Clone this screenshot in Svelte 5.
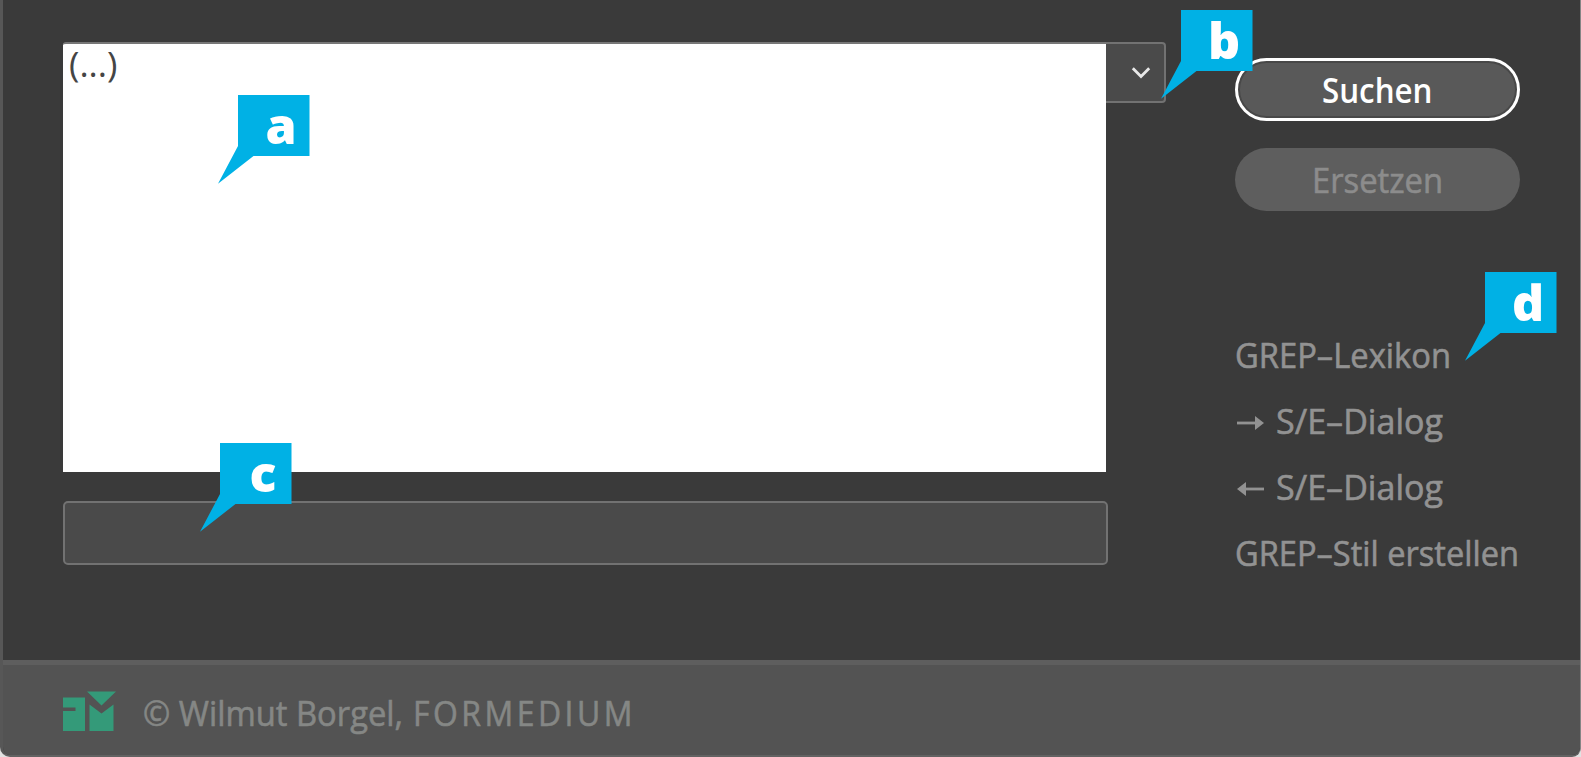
<script>
  const links = [
    { text: 'GREP–Lexikon', width: 216, arrow: null },
    { text: 'S/E–Dialog', width: 167, arrow: 'right' },
    { text: 'S/E–Dialog', width: 167, arrow: 'left' },
    { text: 'GREP–Stil erstellen', width: 284, arrow: null }
  ];
  const tags = [
    { letter: 'a', x: 218, y: 95 },
    { letter: 'b', x: 1161, y: 10.4 },
    { letter: 'c', x: 200, y: 443.4 },
    { letter: 'd', x: 1465.4, y: 271.7 }
  ];
</script>

{#snippet label(text, width, cls = '')}
  <svg class="label {cls}" {width} height="44" aria-label={text}>
    <text x="0" y="33" textLength={width} lengthAdjust="spacingAndGlyphs">{text}</text>
  </svg>
{/snippet}

<div class="window">
  <main>
    <section class="fields">
      <div class="search">
        <div class="editor">{@render label('(...)', 48.5, 'dark')}</div>
        <button class="drop" aria-label="Menü">
          <svg width="20" height="14" viewBox="0 0 20 14"><path d="M1.8 2.2 10 10.4 18.2 2.2" /></svg>
        </button>
      </div>
      <div class="replace"></div>
    </section>
    <aside>
      <button class="pill primary">{@render label('Suchen', 110.5, 'bold')}</button>
      <button class="pill muted">{@render label('Ersetzen', 131, 'dim')}</button>
      <nav>
        {#each links as link}
          <div class="link">
            {#if link.arrow}
              <svg class="arrow {link.arrow}" width="27" height="18" viewBox="0 0 27 18">
                <path d="M0 9H22" /><path class="head" d="M18 2V16L27 9Z" />
              </svg>
            {/if}
            {@render label(link.text, link.width)}
          </div>
        {/each}
      </nav>
    </aside>
  </main>
  <footer>
    <svg class="logo" width="54" height="41" viewBox="0 0 54 41">
      <path d="M0 6.5H22V40H0V20H12.5V16.5H0Z" />
      <path d="M24 .5H53L38.5 14.5Z" />
      <path d="M26.5 13.5 38.5 22.5 50.5 13.5V40H26.5Z" />
    </svg>
    {@render label('© Wilmut Borgel,', 260, 'copy')}
    <span class="brand">{@render label('FORMEDIUM', 223, 'copy wide')}</span>
  </footer>
</div>

{#each tags as tag}
  <svg class="tag" style="left:{tag.x}px;top:{tag.y}px" width="92" height="90">
    <path d="M20 0H91.5V61H35.5L0 88.8 20 51Z" />
    <text x="63" y="48.8">{tag.letter}</text>
  </svg>
{/each}

<style>
  :global(body) { background: #e2e2e2; overflow: hidden; }
  * { box-sizing: border-box; }
  .window {
    width: 1581px; height: 757px; display: flex; flex-direction: column;
    background: #3a3a3a; border-left: 3px solid #575757; border-right: 1px solid #858585;
    border-bottom: 2px solid #626262; border-radius: 0 0 9px 10px; overflow: hidden;
  }
  main { flex: 1; display: flex; justify-content: space-between; padding: 42.4px 60px 0; }
  .search { display: flex; width: 1103px; }
  .editor {
    width: 1043px; height: 430px; background: #fff; border-top: 2.6px solid #777;
    padding: 0 0 0 6px; border-top-left-radius: 3px;
  }
  .drop {
    width: 60px; height: 61px; padding: 1px 13px 0 0; display: flex; align-items: center; justify-content: flex-end;
    border: 2.7px solid #727272; border-left: 0; border-radius: 0 4px 4px 0; background: #4a4a4a;
  }
  .drop path { fill: none; stroke: #e8e8e8; stroke-width: 2.8; }
  .replace {
    width: 1045px; height: 64px; margin-top: 29px; background: #4a4a4a;
    border: 2.7px solid #727272; border-radius: 5px;
  }
  aside { width: 285px; padding-top: 15.6px; }
  .pill {
    display: flex; justify-content: center; align-items: center; width: 285px; height: 63px;
    padding: 6px 0 0; border: 0; border-radius: 32px; background: #5e5e5e;
  }
  .primary { border: 3px solid #fff; background: #595959; box-shadow: inset 0 0 0 2px #484848; }
  .muted { margin-top: 27px; }
  .label {
    display: block; overflow: visible; flex: none;
    font: 500 33.8px 'Open Sans', 'Noto Sans', sans-serif;
    fill: #929292; stroke: #929292; stroke-width: .6px;
  }
  .label.bold { font-weight: 650; fill: #fff; stroke: none; }
  .label.dim { fill: #8c8c8c; stroke: #8c8c8c; }
  .label.dark { font-weight: 400; fill: #454545; stroke: none; }
  .label.copy { fill: #858785; stroke: #858785; }
  nav { margin-top: 113px; }
  .link { display: flex; align-items: center; height: 66px; gap: 12px; }
  .arrow { margin-left: 2px; }
  .arrow path { stroke: #929292; stroke-width: 2.8; }
  .arrow .head { stroke: none; fill: #929292; }
  .arrow.left { transform: scaleX(-1); }
  footer {
    height: 95px; display: flex; align-items: center; padding: 0 60px;
    background: #535353; border-top: 5px solid #5e5e5e;
  }
  .logo { margin: 2px 26px 0 0; fill: #349a79; }
  footer .label { margin-top: 9px; }
  .brand { margin-left: 10px; }
  .label.wide { letter-spacing: 3.7px; }
  .tag { position: absolute; overflow: visible; fill: #00b1e5; }
  .tag text { fill: #fff; font: 800 50px 'Open Sans', 'Noto Sans', sans-serif; text-anchor: middle; }
</style>
